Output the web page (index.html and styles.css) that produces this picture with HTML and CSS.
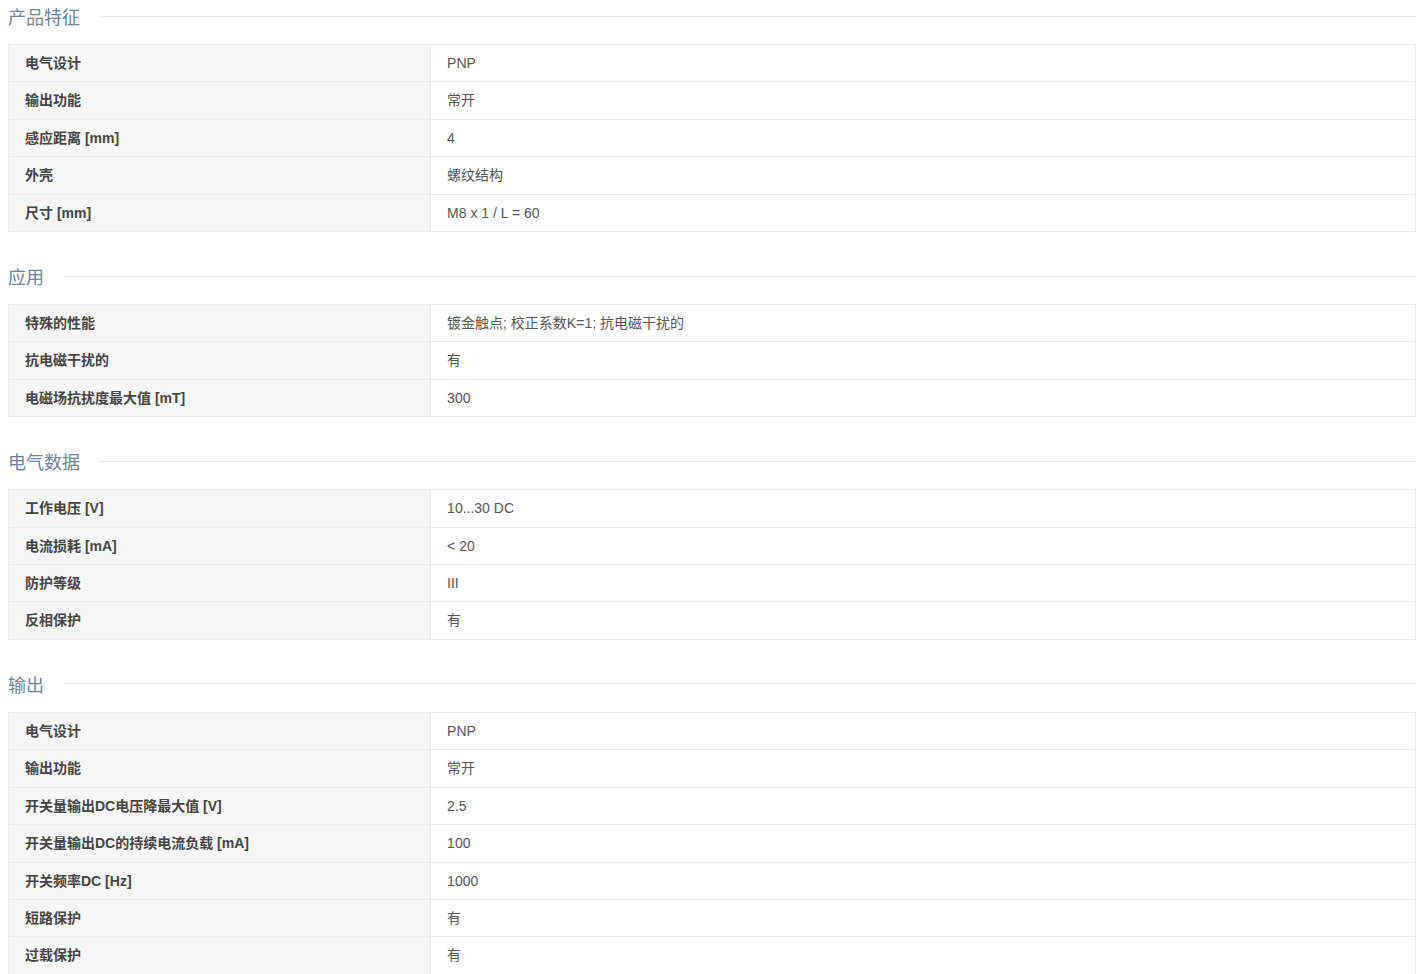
FILE: index.html
```html
<!DOCTYPE html>
<html>
<head>
  <meta charset="utf-8">
  <link rel="stylesheet" href="styles.css">
</head>
<body>
  <div class="spec">
    <div class="spec-title"><span>产品特征</span></div>
    <table class="spec-table">
      <tr><th>电气设计</th><td>PNP</td></tr>
      <tr><th>输出功能</th><td>常开</td></tr>
      <tr><th>感应距离 [mm]</th><td>4</td></tr>
      <tr><th>外壳</th><td>螺纹结构</td></tr>
      <tr><th>尺寸 [mm]</th><td>M8 x 1 / L = 60</td></tr>
    </table>

    <div class="spec-title"><span>应用</span></div>
    <table class="spec-table">
      <tr><th>特殊的性能</th><td>镀金触点; 校正系数K=1; 抗电磁干扰的</td></tr>
      <tr><th>抗电磁干扰的</th><td>有</td></tr>
      <tr><th>电磁场抗扰度最大值 [mT]</th><td>300</td></tr>
    </table>

    <div class="spec-title"><span>电气数据</span></div>
    <table class="spec-table">
      <tr><th>工作电压 [V]</th><td>10...30 DC</td></tr>
      <tr><th>电流损耗 [mA]</th><td>&lt; 20</td></tr>
      <tr><th>防护等级</th><td>III</td></tr>
      <tr><th>反相保护</th><td>有</td></tr>
    </table>

    <div class="spec-title"><span>输出</span></div>
    <table class="spec-table">
      <tr><th>电气设计</th><td>PNP</td></tr>
      <tr><th>输出功能</th><td>常开</td></tr>
      <tr><th>开关量输出DC电压降最大值 [V]</th><td>2.5</td></tr>
      <tr><th>开关量输出DC的持续电流负载 [mA]</th><td>100</td></tr>
      <tr><th>开关频率DC [Hz]</th><td>1000</td></tr>
      <tr><th>短路保护</th><td>有</td></tr>
      <tr><th>过载保护</th><td>有</td></tr>
    </table>
  </div>
</body>
</html>
```

FILE: styles.css
```css
body {
  margin: 0;
  padding: 0 8px;
  font-family: "Liberation Sans", Arial, "Noto Sans CJK SC", sans-serif;
  font-size: 14px;
  color: #555;
  background: #fff;
}

.spec {
  width: 1408px;
}

.spec-title {
  display: flex;
  align-items: center;
  height: 32px;
  margin-top: 28px;
  margin-bottom: 12px;
  font-size: 18px;
  color: #6b8499;
}

.spec-title:first-child {
  margin-top: 0;
}

.spec-title::after {
  content: "";
  flex: 1;
  height: 1px;
  margin-left: 20px;
  background: #e5e5e5;
}

.spec-table {
  width: 100%;
  border-collapse: collapse;
  border: 1px solid #ebebeb;
  font-size: 14px;
}

.spec-table th,
.spec-table td {
  padding: 8px 16px;
  line-height: 20.4px;
  text-align: left;
  border-bottom: 1px solid #ebebeb;
}

.spec-table th {
  width: 30%;
  box-sizing: border-box;
  background: #f6f6f6;
  color: #444;
  font-weight: bold;
  border-right: 1px solid #ebebeb;
}

.spec-table td {
  color: #555;
}
```
